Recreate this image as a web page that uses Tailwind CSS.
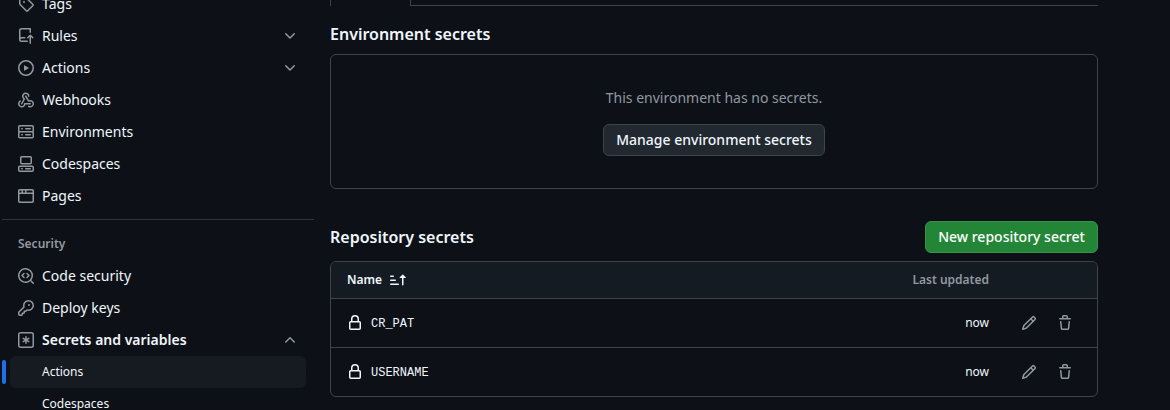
<!DOCTYPE html>
<html lang="en">
<head>
<meta charset="utf-8">
<title>Actions secrets</title>
<script src="https://cdn.jsdelivr.net/npm/@tailwindcss/browser@4"></script>
</head>
<body class="h-[410px] w-[1170px] overflow-hidden bg-[#0d1117] font-['Noto_Sans',sans-serif] text-sm text-[#f0f6fc]">
<svg class="hidden">
  <symbol id="tag" viewBox="0 0 16 16"><path d="M1 7.775V2.75C1 1.784 1.784 1 2.75 1h5.025c.464 0 .91.184 1.238.513l6.25 6.25a1.75 1.75 0 0 1 0 2.474l-5.026 5.026a1.75 1.75 0 0 1-2.474 0l-6.25-6.25A1.752 1.752 0 0 1 1 7.775Zm1.5 0c0 .066.026.13.073.177l6.25 6.25a.25.25 0 0 0 .354 0l5.025-5.025a.25.25 0 0 0 0-.354l-6.25-6.25a.25.25 0 0 0-.177-.073H2.75a.25.25 0 0 0-.25.25ZM6 5a1 1 0 1 1 0 2 1 1 0 0 1 0-2Z"/></symbol>
  <symbol id="repo-push" viewBox="0 0 16 16"><path d="M1 2.5A2.5 2.5 0 0 1 3.5 0h8.75a.75.75 0 0 1 .75.75v3.5a.75.75 0 0 1-1.5 0V1.5h-8a1 1 0 0 0-1 1v6.708A2.493 2.493 0 0 1 3.5 9h3.25a.75.75 0 0 1 0 1.5H3.5a1 1 0 0 0 0 2h5.75a.75.75 0 0 1 0 1.5H3.5A2.5 2.5 0 0 1 1 11.5Zm13.23 7.79h-.001l-1.224-1.224v6.184a.75.75 0 0 1-1.5 0V9.066L10.28 10.29a.75.75 0 0 1-1.06-1.061l2.505-2.504a.75.75 0 0 1 1.06 0L15.29 9.23a.751.751 0 0 1-.018 1.042.751.751 0 0 1-1.042.018Z"/></symbol>
  <symbol id="play" viewBox="0 0 16 16"><path d="M8 0a8 8 0 1 1 0 16A8 8 0 0 1 8 0ZM1.5 8a6.5 6.5 0 1 0 13 0 6.5 6.5 0 0 0-13 0Zm4.879-2.773 4.264 2.559a.25.25 0 0 1 0 .428l-4.264 2.559A.25.25 0 0 1 6 10.559V5.442a.25.25 0 0 1 .379-.215Z"/></symbol>
  <symbol id="webhook" viewBox="0 0 16 16"><path d="M5.5 4.25a2.25 2.25 0 0 1 4.5 0 .75.75 0 0 0 1.5 0 3.75 3.75 0 1 0-6.14 2.889l-2.272 4.258a.75.75 0 0 0 1.324.706L7 7.25a.75.75 0 0 0-.309-1.015A2.25 2.25 0 0 1 5.5 4.25Z"/><path d="M7.364 3.607a.75.75 0 0 1 1.03.257l2.608 4.349a3.75 3.75 0 1 1-.628 6.785.75.75 0 0 1 .752-1.299 2.25 2.25 0 1 0-.033-3.88.75.75 0 0 1-1.03-.256L7.107 4.636a.75.75 0 0 1 .257-1.03Z"/><path d="M2.9 8.776A.75.75 0 0 1 2.625 9.8 2.25 2.25 0 1 0 6 11.75a.75.75 0 0 1 .75-.751h5.5a.75.75 0 0 1 0 1.5H7.425a3.751 3.751 0 1 1-5.55-3.998.75.75 0 0 1 1.024.274Z"/></symbol>
  <symbol id="server" viewBox="0 0 16 16"><path d="M1.75 1h12.5c.966 0 1.75.784 1.75 1.75v4c0 .372-.116.717-.314 1 .198.283.314.628.314 1v4a1.75 1.75 0 0 1-1.75 1.75H1.75A1.75 1.75 0 0 1 0 12.75v-4c0-.358.109-.707.314-1a1.739 1.739 0 0 1-.314-1v-4C0 1.784.784 1 1.75 1ZM1.5 2.75v4c0 .138.112.25.25.25h12.5a.25.25 0 0 0 .25-.25v-4a.25.25 0 0 0-.25-.25H1.75a.25.25 0 0 0-.25.25Zm.25 5.75a.25.25 0 0 0-.25.25v4c0 .138.112.25.25.25h12.5a.25.25 0 0 0 .25-.25v-4a.25.25 0 0 0-.25-.25ZM7 4.75A.75.75 0 0 1 7.75 4h4.5a.75.75 0 0 1 0 1.5h-4.5A.75.75 0 0 1 7 4.75ZM7.75 10h4.5a.75.75 0 0 1 0 1.5h-4.5a.75.75 0 0 1 0-1.5ZM3 4.75A.75.75 0 0 1 3.75 4h.5a.75.75 0 0 1 0 1.5h-.5A.75.75 0 0 1 3 4.75ZM3.75 10h.5a.75.75 0 0 1 0 1.5h-.5a.75.75 0 0 1 0-1.5Z"/></symbol>
  <symbol id="codespaces" viewBox="0 0 16 16"><path d="M0 11.25c0-.966.784-1.75 1.75-1.75h12.5c.966 0 1.75.784 1.75 1.75v3A1.75 1.75 0 0 1 14.25 16H1.75A1.75 1.75 0 0 1 0 14.25Zm2-9.5C2 .784 2.784 0 3.75 0h8.5C13.216 0 14 .784 14 1.75v5a1.75 1.75 0 0 1-1.75 1.75h-8.5A1.75 1.75 0 0 1 2 6.75Zm1.75-.25a.25.25 0 0 0-.25.25v5c0 .138.112.25.25.25h8.5a.25.25 0 0 0 .25-.25v-5a.25.25 0 0 0-.25-.25Zm-2 9.5a.25.25 0 0 0-.25.25v3c0 .138.112.25.25.25h12.5a.25.25 0 0 0 .25-.25v-3a.25.25 0 0 0-.25-.25Z"/><path d="M7 12.75a.75.75 0 0 1 .75-.75h4.5a.75.75 0 0 1 0 1.5h-4.5a.75.75 0 0 1-.75-.75Zm-4 0a.75.75 0 0 1 .75-.75h.5a.75.75 0 0 1 0 1.5h-.5a.75.75 0 0 1-.75-.75Z"/></symbol>
  <symbol id="browser" viewBox="0 0 16 16"><path d="M0 2.75C0 1.784.784 1 1.75 1h12.5c.966 0 1.75.784 1.75 1.75v10.5A1.75 1.75 0 0 1 14.25 15H1.75A1.75 1.75 0 0 1 0 13.25ZM14.5 6h-13v7.25c0 .138.112.25.25.25h12.5a.25.25 0 0 0 .25-.25Zm-6-3.5v2h6V2.75a.25.25 0 0 0-.25-.25ZM5 2.5v2h2v-2Zm-3.25 0a.25.25 0 0 0-.25.25V4.5h2v-2Z"/></symbol>
  <symbol id="codescan" viewBox="0 0 16 16"><path d="M8.47 4.97a.75.75 0 0 0 0 1.06L9.94 7.5 8.47 8.97a.75.75 0 1 0 1.06 1.06l2-2a.75.75 0 0 0 0-1.06l-2-2a.75.75 0 0 0-1.06 0ZM6.53 6.03a.75.75 0 0 0-1.06-1.06l-2 2a.75.75 0 0 0 0 1.06l2 2a.75.75 0 1 0 1.06-1.06L5.06 7.5l1.47-1.47Z"/><path d="M12.246 13.307a7.501 7.501 0 1 1 1.06-1.06l2.474 2.473a.749.749 0 0 1-.326 1.275.749.749 0 0 1-.734-.215ZM1.5 7.5a6.002 6.002 0 0 0 3.608 5.504 6.002 6.002 0 0 0 6.486-1.117.748.748 0 0 1 .292-.293A6 6 0 1 0 1.5 7.5Z"/></symbol>
  <symbol id="key" viewBox="0 0 16 16"><path d="M10.5 0a5.499 5.499 0 1 1-1.288 10.848l-.932.932a.749.749 0 0 1-.53.22H7v.75a.749.749 0 0 1-.22.53l-.5.5a.749.749 0 0 1-.53.22H5v.75a.749.749 0 0 1-.22.53l-.5.5a.749.749 0 0 1-.53.22h-2A1.75 1.75 0 0 1 0 14.25v-2c0-.199.079-.389.22-.53l4.932-4.932A5.5 5.5 0 0 1 10.5 0Zm-4 5.5c-.001.431.069.86.205 1.269a.75.75 0 0 1-.181.768L1.5 12.56v1.69c0 .138.112.25.25.25h1.69l.06-.06v-1.19a.75.75 0 0 1 .75-.75h1.19l.06-.06v-1.19a.75.75 0 0 1 .75-.75h1.19l1.023-1.025a.75.75 0 0 1 .768-.18A4 4 0 1 0 6.5 5.5ZM11 6a1 1 0 1 1 0-2 1 1 0 0 1 0 2Z"/></symbol>
  <symbol id="asterisk" viewBox="0 0 16 16"><path d="M0 2.75A2.75 2.75 0 0 1 2.75 0h10.5A2.75 2.75 0 0 1 16 2.75v10.5A2.75 2.75 0 0 1 13.25 16H2.75A2.75 2.75 0 0 1 0 13.25ZM2.75 1.5c-.69 0-1.25.56-1.25 1.25v10.5c0 .69.56 1.25 1.25 1.25h10.5c.69 0 1.25-.56 1.25-1.25V2.75c0-.69-.56-1.25-1.25-1.25Z"/><path d="M8 4a.75.75 0 0 1 .75.75V6.7l1.69-.975a.75.75 0 0 1 .75 1.3L9.5 8l1.69.976a.75.75 0 0 1-.75 1.298L8.75 9.3v1.951a.75.75 0 0 1-1.5 0V9.299l-1.69.976a.75.75 0 0 1-.75-1.3L6.5 8l-1.69-.975a.75.75 0 0 1 .75-1.3l1.69.976V4.75A.75.75 0 0 1 8 4Z"/></symbol>
  <symbol id="down" viewBox="0 0 16 16"><path d="M12.78 5.22a.749.749 0 0 1 0 1.06l-4.25 4.25a.749.749 0 0 1-1.06 0L3.22 6.28a.749.749 0 1 1 1.06-1.06L8 8.939l3.72-3.719a.749.749 0 0 1 1.06 0Z"/></symbol>
  <symbol id="up" viewBox="0 0 16 16"><path d="M3.22 10.53a.749.749 0 0 1 0-1.06l4.25-4.25a.749.749 0 0 1 1.06 0l4.25 4.25a.749.749 0 1 1-1.06 1.06L8 6.811 4.28 10.53a.749.749 0 0 1-1.06 0Z"/></symbol>
  <symbol id="lock" viewBox="0 0 16 16"><path d="M4 4a4 4 0 0 1 8 0v2h.25c.966 0 1.75.784 1.75 1.75v5.5A1.75 1.75 0 0 1 12.25 15h-8.5A1.75 1.75 0 0 1 2 13.25v-5.5C2 6.784 2.784 6 3.75 6H4Zm8.25 3.5h-8.5a.25.25 0 0 0-.25.25v5.5c0 .138.112.25.25.25h8.5a.25.25 0 0 0 .25-.25v-5.5a.25.25 0 0 0-.25-.25ZM10.5 6V4a2.5 2.5 0 1 0-5 0v2Z"/></symbol>
  <symbol id="pencil" viewBox="0 0 16 16"><path d="M11.013 1.427a1.75 1.75 0 0 1 2.474 0l1.086 1.086a1.75 1.75 0 0 1 0 2.474l-8.61 8.61c-.21.21-.47.364-.756.445l-3.251.93a.75.75 0 0 1-.927-.928l.929-3.25c.081-.286.235-.547.445-.758l8.61-8.61Zm.176 4.823L9.75 4.81l-6.286 6.287a.253.253 0 0 0-.064.108l-.558 1.953 1.953-.558a.253.253 0 0 0 .108-.064Zm1.238-3.763a.25.25 0 0 0-.354 0L10.811 3.75l1.439 1.44 1.263-1.263a.25.25 0 0 0 0-.354Z"/></symbol>
  <symbol id="trash" viewBox="0 0 16 16"><path d="M11 1.75V3h2.25a.75.75 0 0 1 0 1.5H2.75a.75.75 0 0 1 0-1.5H5V1.75C5 .784 5.784 0 6.75 0h2.5C10.216 0 11 .784 11 1.75ZM4.496 6.675l.66 6.6a.25.25 0 0 0 .249.225h5.19a.25.25 0 0 0 .249-.225l.66-6.6a.75.75 0 0 1 1.492.149l-.66 6.6A1.748 1.748 0 0 1 10.595 15h-5.19a1.75 1.75 0 0 1-1.741-1.575l-.66-6.6a.75.75 0 1 1 1.492-.15ZM6.5 1.75V3h3V1.75a.25.25 0 0 0-.25-.25h-2.5a.25.25 0 0 0-.25.25Z"/></symbol>
  <symbol id="sort" viewBox="0 0 16 16"><path d="m12.927 2.573 3 3A.25.25 0 0 1 15.75 6H13.5v6.75a.75.75 0 0 1-1.5 0V6H9.75a.25.25 0 0 1-.177-.427l3-3a.25.25 0 0 1 .354 0ZM0 12.25a.75.75 0 0 1 .75-.75h7.5a.75.75 0 0 1 0 1.5H.75a.75.75 0 0 1-.75-.75Zm0-4a.75.75 0 0 1 .75-.75h4.5a.75.75 0 0 1 0 1.5H.75A.75.75 0 0 1 0 8.25Zm0-4a.75.75 0 0 1 .75-.75h2.5a.75.75 0 0 1 0 1.5H.75A.75.75 0 0 1 0 4.25Z"/></symbol>
</svg>

<div class="flex h-full gap-4">
  <aside class="-mt-3 w-[314px] shrink-0 pl-0.5">
    <nav class="px-2 [&_svg]:size-4 [&_svg]:fill-[#9198a1]">
      <a class="flex h-8 items-center gap-2 px-2"><svg><use href="#tag"/></svg>Tags</a>
      <a class="flex h-8 items-center gap-2 px-2"><svg><use href="#repo-push"/></svg><span class="grow">Rules</span><svg><use href="#down"/></svg></a>
      <a class="flex h-8 items-center gap-2 px-2"><svg><use href="#play"/></svg><span class="grow">Actions</span><svg><use href="#down"/></svg></a>
      <a class="flex h-8 items-center gap-2 px-2"><svg><use href="#webhook"/></svg>Webhooks</a>
      <a class="flex h-8 items-center gap-2 px-2"><svg><use href="#server"/></svg>Environments</a>
      <a class="flex h-8 items-center gap-2 px-2"><svg><use href="#codespaces"/></svg>Codespaces</a>
      <a class="flex h-8 items-center gap-2 px-2"><svg><use href="#browser"/></svg>Pages</a>
    </nav>
    <hr class="mt-[7px] border-t border-[#2f353d]">
    <nav class="px-2 pt-2 [&_svg]:size-4 [&_svg]:fill-[#9198a1]">
      <h3 class="flex h-8 items-center px-2 text-xs font-semibold text-[#9198a1]">Security</h3>
      <a class="flex h-8 items-center gap-2 px-2"><svg><use href="#codescan"/></svg>Code security</a>
      <a class="flex h-8 items-center gap-2 px-2"><svg><use href="#key"/></svg>Deploy keys</a>
      <a class="flex h-8 items-center gap-2 px-2 font-semibold"><svg><use href="#asterisk"/></svg><span class="grow">Secrets and variables</span><svg><use href="#up"/></svg></a>
      <a class="-ml-2 flex h-8 items-center gap-1 text-xs"><span class="h-6 w-1 rounded-md bg-[#1f6feb]"></span><span class="flex h-8 grow items-center rounded-md bg-[#161a21] pl-8">Actions</span></a>
      <a class="flex h-8 items-center pl-8 text-xs">Codespaces</a>
    </nav>
  </aside>

  <main class="w-[768px] shrink-0">
    <div class="flex h-1.5">
      <div class="w-[81px] border-x border-[#3d444d]"></div>
      <div class="grow border-b border-[#3d444d]"></div>
    </div>
    <h2 class="mt-4 text-base leading-6 font-semibold">Environment secrets</h2>
    <section class="mt-2 flex h-[135px] flex-col items-center rounded-md border border-[#3d444d] pt-8">
      <p class="leading-[21px] text-[#9198a1]">This environment has no secrets.</p>
      <button class="mt-4 h-8 w-[222px] rounded-md border border-[#3d444d] bg-[#212830] font-medium">Manage environment secrets</button>
    </section>
    <div class="mt-8 flex h-8 items-center justify-between">
      <h2 class="text-base leading-6 font-semibold">Repository secrets</h2>
      <button class="h-8 w-[173px] rounded-md border border-[#39914a] bg-[#238636] font-medium text-white">New repository secret</button>
    </div>
    <section class="mt-2 overflow-hidden rounded-md border border-[#3d444d] text-xs">
      <div class="flex h-9 items-center bg-[#151b23] px-4 font-semibold">
        <span>Name</span>
        <svg class="ml-2 size-4 fill-current"><use href="#sort"/></svg>
        <span class="mr-[92px] ml-auto text-[#9198a1]">Last updated</span>
      </div>
      <div class="flex h-[49px] items-center border-t border-[#3d444d] px-4">
        <svg class="mr-2 size-4 fill-current"><use href="#lock"/></svg>
        <span class="pt-0.5 font-['Liberation_Mono',monospace]">CR_PAT</span>
        <span class="ml-auto">now</span>
        <svg class="ml-8 size-4 fill-[#9198a1]"><use href="#pencil"/></svg>
        <svg class="mr-2 ml-5 size-4 fill-[#9198a1]"><use href="#trash"/></svg>
      </div>
      <div class="flex h-[49px] items-center border-t border-[#3d444d] px-4">
        <svg class="mr-2 size-4 fill-current"><use href="#lock"/></svg>
        <span class="pt-0.5 font-['Liberation_Mono',monospace]">USERNAME</span>
        <span class="ml-auto">now</span>
        <svg class="ml-8 size-4 fill-[#9198a1]"><use href="#pencil"/></svg>
        <svg class="mr-2 ml-5 size-4 fill-[#9198a1]"><use href="#trash"/></svg>
      </div>
    </section>
  </main>
</div>
</body>
</html>
